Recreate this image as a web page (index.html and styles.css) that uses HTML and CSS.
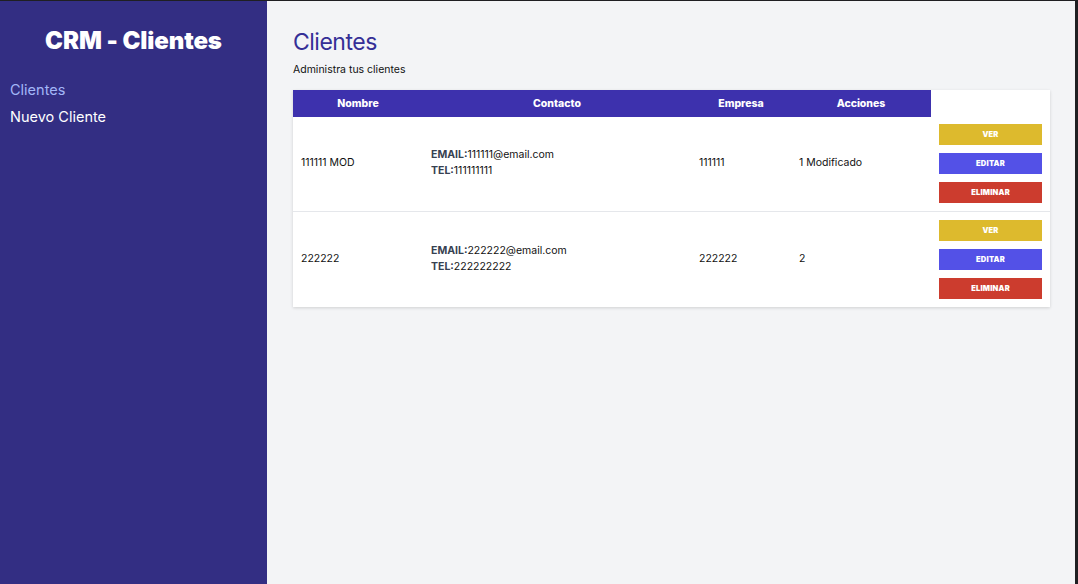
FILE: index.html
```html
<!DOCTYPE html>
<html lang="es">
<head>
<meta charset="utf-8">
<title>CRM - Clientes</title>
<link rel="stylesheet" href="styles.css">
</head>
<body>
<div class="app">
  <aside class="sidebar">
    <h2 class="brand">CRM - Clientes</h2>
    <nav class="nav">
      <a class="nav-link active" href="#">Clientes</a>
      <a class="nav-link" href="#">Nuevo Cliente</a>
    </nav>
  </aside>
  <main class="main">
    <h1 class="title">Clientes</h1>
    <p class="subtitle">Administra tus clientes</p>
    <table class="table">
      <thead>
        <tr>
          <th class="c-name">Nombre</th>
          <th class="c-contact">Contacto</th>
          <th class="c-company">Empresa</th>
          <th class="c-actions">Acciones</th>
        </tr>
      </thead>
      <tbody>
        <tr>
          <td>111111 MOD</td>
          <td><div><span class="lbl">EMAIL:</span>111111@email.com</div><div><span class="lbl">TEL:</span>111111111</div></td>
          <td>111111</td>
          <td>1 Modificado</td>
          <td class="btns">
            <button class="btn btn-ver">Ver</button>
            <button class="btn btn-edit">Editar</button>
            <button class="btn btn-del">Eliminar</button>
          </td>
        </tr>
        <tr>
          <td>222222</td>
          <td><div><span class="lbl">EMAIL:</span>222222@email.com</div><div><span class="lbl">TEL:</span>222222222</div></td>
          <td>222222</td>
          <td>2</td>
          <td class="btns">
            <button class="btn btn-ver">Ver</button>
            <button class="btn btn-edit">Editar</button>
            <button class="btn btn-del">Eliminar</button>
          </td>
        </tr>
      </tbody>
    </table>
  </main>
</div>
</body>
</html>
```
FILE: styles.css
```css
* { box-sizing: border-box; }
html, body { margin: 0; height: 100%; }
body {
  font-family: Inter, "Noto Sans", sans-serif;
  background: #1f1f22;
  padding: 1px 3px 0 0;
}
.app {
  display: flex;
  height: 583px;
}
.sidebar {
  width: 267px;
  flex: none;
  background: #332e83;
  padding: 28px 10px 0;
}
.brand {
  margin: 0 0 27px;
  text-align: center;
  color: #fff;
  font-size: 24px;
  font-weight: 900;
  line-height: 24px;
  letter-spacing: -0.1px;
}
.nav { display: flex; flex-direction: column; gap: 7px; }
.nav-link {
  color: #fff;
  text-decoration: none;
  font-size: 14.5px;
  line-height: 20px;
}
.nav-link.active { color: #a3b7f8; }
.main {
  flex: 1;
  background: #f3f4f6;
  padding: 28px 25px 0 26px;
}
.title {
  margin: 0;
  font-size: 23px;
  font-weight: 400;
  color: #352f96;
  line-height: 26px;
  letter-spacing: -0.5px;
}
.subtitle {
  margin: 8px 0 13px;
  font-size: 10.5px;
  line-height: 14px;
  color: #111;
}
.table {
  width: 100%;
  border-collapse: collapse;
  background: #fff;
  box-shadow: 0 1px 3px rgba(0,0,0,0.15);
  font-size: 10.5px;
  color: #111;
}
.table th {
  background: #3d31ad;
  color: #fff;
  font-weight: 800;
  font-size: 10.5px;
  height: 27px;
  padding: 0 8px;
}
.c-name { width: 130px; }
.c-contact { width: 268px; }
.c-company { width: 100px; }
.c-actions { width: 140px; }
.table td {
  padding: 7px 8px 8px;
  vertical-align: middle;
  line-height: 16px;
}
.table tbody tr + tr td { border-top: 1px solid #e5e7eb; padding-top: 8px; }
.lbl { font-weight: 700; color: #374151; }
.btns { display: flex; flex-direction: column; gap: 8px; }
.btn {
  display: block;
  width: 103px;
  height: 21px;
  border: 0;
  padding: 0;
  color: #fff;
  font-family: Inter, sans-serif;
  font-weight: 900;
  font-size: 7.5px;
  text-transform: uppercase;
  letter-spacing: 0.2px;
}
.btn-ver { background: #ddba2d; }
.btn-edit { background: #5351e7; }
.btn-del { background: #cc3c2e; }
```
